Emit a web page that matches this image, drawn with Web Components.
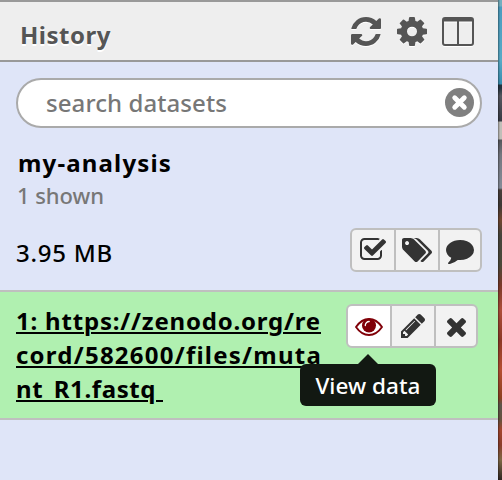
<!DOCTYPE html>
<html lang="en">
<head>
<meta charset="utf-8">
<title>History</title>
<style>
html,body{margin:0;height:100%;overflow:hidden}
body{font:500 24px/34px "Lucida Grande","Noto Sans","Open Sans",sans-serif;color:#000}
</style>
</head>
<body>
<history-app></history-app>
<script>
const ICONS = {
  refresh:['0 128 1536 1536','<path d="M1511 1056q0 5-1 7-64 268-268 434.5t-478 166.500q-146 0-282.500-55t-243.500-157l-129 129q-19 19-45 19t-45-19-19-45v-448q0-26 19-45t45-19h448q26 0 45 19t19 45-19 45l-137 137q71 66 161 102t187 36q134 0 250-65t186-179q11-17 53-117 8-23 30-23h192q13 0 22.500 9.500t9.500 22.500zm25-800v448q0 26-19 45t-45 19h-448q-26 0-45-19t-19-45 19-45l138-138q-148-137-349-137-134 0-250 65t-186 179q-11 17-53 117-8 23-30 23h-199q-13 0-22.500-9.500t-9.500-22.500v-7q65-268 270-434.500t480-166.500q146 0 284 55.500t245 156.500l130-129q19-19 45-19t45 19 19 45z"/>'],
  cog:['0 128 1536 1536','<path d="M1024 896q0-106-75-181t-181-75-181 75-75 181 75 181 181 75 181-75 75-181zm512-109v222q0 12-8 23t-20 13l-185 28q-19 54-39 91 35 50 107 138 10 12 10 25t-9 23q-27 37-99 108t-94 71q-12 0-26-9l-138-108q-44 23-91 38-16 136-29 186-7 28-36 28h-222q-14 0-24.500-8.500t-11.500-21.500l-28-184q-49-16-90-37l-141 107q-10 9-25 9-14 0-25-11-126-114-165-168-7-10-7-23 0-12 8-23 15-21 51-66.500t54-70.500q-27-50-41-99l-183-27q-13-2-21-12.500t-8-23.500v-222q0-12 8-23t19-13l186-28q14-46 39-92-40-57-107-138-10-12-10-24 0-10 9-23 26-36 98.500-107.500t94.500-71.500q13 0 26 10l138 107q44-23 91-38 16-136 29-186 7-28 36-28h222q14 0 24.500 8.500t11.500 21.500l28 184q49 16 90 37l142-107q9-9 24-9 13 0 25 10 129 119 165 170 7 8 7 22 0 12-8 23-15 21-51 66.500t-54 70.500q26 50 41 98l183 28q13 2 21 12.500t8 23.500z"/>'],
  columns:['0 0 32 29','<path fill-rule="evenodd" d="M3 0h26a3 3 0 0 1 3 3v23a3 3 0 0 1-3 3H3a3 3 0 0 1-3-3V3a3 3 0 0 1 3-3zM2 4.500V26a1 1 0 0 0 1 1h12V4.500zM17 4.500V27h12a1 1 0 0 0 1-1V4.500z"/>'],
  clear:['0 0 29 29','<circle cx="14.500" cy="14.500" r="14.500"/><path d="M9.700 9.700l9.600 9.600M19.300 9.700l-9.600 9.600" stroke="#fff" stroke-width="4.800" stroke-linecap="round"/>'],
  check:['0 128 1663 1408','<path d="M1408 930v318q0 119-84.500 203.500t-203.500 84.500h-832q-119 0-203.500-84.500t-84.500-203.500v-832q0-119 84.500-203.500t203.500-84.500h832q63 0 117 25 15 7 18 23 3 17-9 29l-49 49q-10 10-23 10-3 0-9-2-23-6-45-6h-832q-66 0-113 47t-47 113v832q0 66 47 113t113 47h832q66 0 113-47t47-113v-254q0-13 9-22l64-64q10-10 23-10 6 0 12 3 20 8 20 29zm231-489l-814 814q-24 24-57 24t-57-24l-430-430q-24-24-24-57t24-57l110-110q24-24 57-24t57 24l263 263 647-647q24-24 57-24t57 24l110 110q24 24 24 57t-24 57z"/>'],
  tags:['0 128 1899 1515','<path d="M448 448q0-53-37.500-90.500t-90.500-37.500-90.500 37.500-37.500 90.500 37.500 90.500 90.500 37.500 90.500-37.500 37.500-90.500zm1067 576q0 53-37 90l-491 492q-39 37-91 37-53 0-90-37l-715-716q-38-37-64.500-101t-26.500-117v-416q0-52 38-90t90-38h416q53 0 117 26.500t102 64.500l715 714q37 39 37 91zm384 0q0 53-37 90l-491 492q-39 37-91 37-36 0-59-14t-53-45l470-470q37-37 37-90 0-52-37-91l-715-714q-38-38-102-64.500t-117-26.500h224q53 0 117 26.500t102 64.500l715 714q37 39 37 91z"/>'],
  comment:['0 256 1792 1536','<path d="M1792 896q0 174-120 321.500t-326 233-450 85.500q-70 0-145-8-198 175-460 242-49 14-114 22-17 2-30.500-9t-17.500-29v-1q-3-4-.5-12t2-10 4.500-9.500l6-9 7-9 8-9q7-8 31-34.500t34.500-38 31-39.500 32.500-51 27-59 26-76q-157-89-247.500-220t-90.500-281q0-130 71-248.500t191-204.500 286-136.500 348-50.500q244 0 450 85.500t326 233 120 321.500z"/>'],
  pencil:['0 149 1515 1515','<path d="M363 1536l91-91-235-235-91 91v107h128v128h107zm523-928q0-22-22-22-10 0-17 7l-542 542q-7 7-7 17 0 22 22 22 10 0 17-7l542-542q7-7 7-17zm-54-192l416 416-832 832h-416v-416zm683 96q0 53-37 90l-166 166-416-416 166-165q36-38 90-38 53 0 91 38l235 234q37 39 37 91z"/>'],
  times:['110 366 1188 1188','<path d="M1298 1322q0 40-28 68l-136 136q-28 28-68 28t-68-28l-294-294-294 294q-28 28-68 28t-68-28l-136-136q-28-28-28-68t28-68l294-294-294-294q-28-28-28-68t28-68l136-136q28-28 68-28t68 28l294 294 294-294q28-28 68-28t68 28l136 136q28 28 28 68t-28 68l-294 294 294 294q28 28 28 68z"/>'],
  eye:['0 0 28 18','<path d="M1 9Q6.500 1 14 1T27 9Q21.500 17 14 17T1 9z" fill="none" stroke="currentColor" stroke-width="1.900" stroke-linejoin="round"/><circle cx="14" cy="7.500" r="7"/><path d="M10.300 7.500a3.900 3.900 0 0 1 3.900-4" fill="none" stroke="#fff" stroke-width="1.300" stroke-linecap="round"/>']
};
customElements.define('ui-icon', class extends HTMLElement {
  connectedCallback(){
    const [box, body] = ICONS[this.getAttribute('name')];
    const w = this.getAttribute('w'), h = this.getAttribute('h');
    this.attachShadow({mode:'open'}).innerHTML =
      `<style>:host{display:block;flex:none}svg{display:block;fill:currentColor;overflow:visible}</style>
       <svg width="${w}" height="${h}" viewBox="${box}" preserveAspectRatio="none">${body}</svg>`;
  }
});

/* One line of text, tracked so that its advance equals the "w" attribute. */
customElements.define('fit-text', class extends HTMLElement {
  connectedCallback(){
    this.attachShadow({mode:'open'}).innerHTML =
      '<style>:host{display:block;width:max-content;white-space:pre}span{display:inline-block;text-decoration:inherit}</style><span><slot></slot></span>';
    const span = this.shadowRoot.querySelector('span');
    const gap = (+this.getAttribute('w') - span.getBoundingClientRect().width) / this.textContent.length;
    this.style.letterSpacing = gap.toFixed(3) + 'px';
  }
});

const define = (name, html) => customElements.define(name, class extends HTMLElement {
  constructor(){ super(); this.attachShadow({mode:'open'}).innerHTML = html; }
});

define('panel-header', `<style>
:host{display:flex;box-sizing:border-box;height:62px;padding:0 24px 0 20px;border-top:2px solid #999;border-bottom:2px solid #999;background:#eee;color:#555;align-items:center;justify-content:space-between}
fit-text{font-weight:bold;padding-top:8px;text-shadow:0 2px 0 #fff}
nav{display:flex;gap:15.500px;padding-top:1px;filter:drop-shadow(0 1px 0 #fff)}
</style><fit-text w="91">History</fit-text>
<nav><ui-icon name="refresh" w="30" h="29"></ui-icon><ui-icon name="cog" w="30" h="29"></ui-icon><ui-icon name="columns" w="32" h="29"></ui-icon></nav>`);

define('search-box', `<style>
:host{display:flex;box-sizing:border-box;height:50px;margin:16px 16px 0;padding:0 6px 0 28px;border:2px solid #aaa;border-radius:25px;background:#fff;color:#777;align-items:center;justify-content:space-between}
ui-icon{color:#808080;margin-top:-2px}
</style><fit-text w="181">search datasets</fit-text><ui-icon name="clear" w="29" h="29"></ui-icon>`);

define('button-group', `<style>
:host{display:grid;grid-template-columns:42px 42px 40px;box-sizing:border-box;width:132px;height:44px;border:2px solid #bfbfbf;border-radius:6px;background:#bfbfbf;gap:2px;overflow:hidden;color:#333}
::slotted(button){margin:0;padding:0;border:0;display:flex;align-items:center;justify-content:center;background:#f2f2f2;color:inherit}
::slotted(button.active){background:#fff;color:#800008}
</style><slot></slot>`);

define('history-summary', `<style>
:host{display:block;padding:18px 16px 18px}
.name{font-weight:bold;margin-left:2px}
.shown{font-size:22px;line-height:30px;color:#777;margin-left:1px}
.row{display:flex;justify-content:space-between;align-items:center;margin-top:18px}
.row fit-text{padding-top:5px}
</style>
<fit-text class="name" w="154">my-analysis</fit-text>
<fit-text class="shown" w="87">1 shown</fit-text>
<div class="row"><fit-text w="97">3.95 MB</fit-text>
<button-group><button><ui-icon name="check" w="26" h="22" style="margin-top:-2px"></ui-icon></button><button><ui-icon name="tags" w="30" h="24"></ui-icon></button><button><ui-icon name="comment" w="28" h="24" style="margin-top:3px"></ui-icon></button></button-group></div>`);

define('tool-tip', `<style>
:host{position:absolute;left:-46px;top:50px;width:136px;height:52px}
i{display:block;width:20px;height:10px;margin-left:58px;background:#121812;clip-path:polygon(50% 0,100% 100%,0 100%)}
div{height:42px;border-radius:6px;background:#121812;color:#fff;display:flex;justify-content:center;align-items:center}
fit-text{font-size:22.500px;padding-top:2px}
</style><i></i><div><fit-text w="105">View data</fit-text></div>`);

define('dataset-item', `<style>
:host{display:flex;box-sizing:border-box;height:130px;padding:12px 20px 0 16px;justify-content:space-between;align-items:flex-start;background:#b0f0b0;border-top:2px solid #bfbfbf;border-bottom:2px solid #bfbfbf}
.title{font-weight:bold}
.title fit-text{text-decoration:underline;text-decoration-thickness:2px;text-underline-offset:2px}
.actions{position:relative}
</style>
<div class="title"><fit-text w="305">1: https://zenodo.org/re</fit-text><fit-text w="306">cord/582600/files/muta</fit-text><fit-text w="147">nt_R1.fastq </fit-text></div>
<div class="actions"><button-group><button class="active"><ui-icon name="eye" w="28" h="18" style="margin-top:2px"></ui-icon></button><button><ui-icon name="pencil" w="24" h="24"></ui-icon></button><button><ui-icon name="times" w="19" h="19" style="margin-top:2px"></ui-icon></button></button-group>
<tool-tip></tool-tip></div>`);

define('history-app', `<style>
:host{display:grid;grid-template-columns:498px 4px;height:480px;overflow:hidden}
main{background:#dfe5f8;min-width:0}
aside{background:linear-gradient(90deg,#0006,#0000 2px),linear-gradient(#73aebf 0 6px,#4b9cbf 7px,#58aac6 60px,#388daf 84px,#22333f 85px 88px,#55575f 96px,#383a43 121px,#c0beb8 122px 139px,#55565b 140px,#75777f 155px,#858c98 188px,#493f3a 190px,#3e3835 205px,#70462f 220px,#46443c 235px,#4b4839 265px,#7a3828 285px,#ad4d38 310px,#8c3826 340px,#b54e31 370px,#8c4020 398px,#5b554b 405px,#67513e 420px,#a4452d 430px,#8b3d2b 445px,#7e6845 460px,#302622 480px)}
</style><main><panel-header></panel-header><search-box></search-box><history-summary></history-summary><dataset-item></dataset-item></main><aside></aside>`);
</script>
</body>
</html>
